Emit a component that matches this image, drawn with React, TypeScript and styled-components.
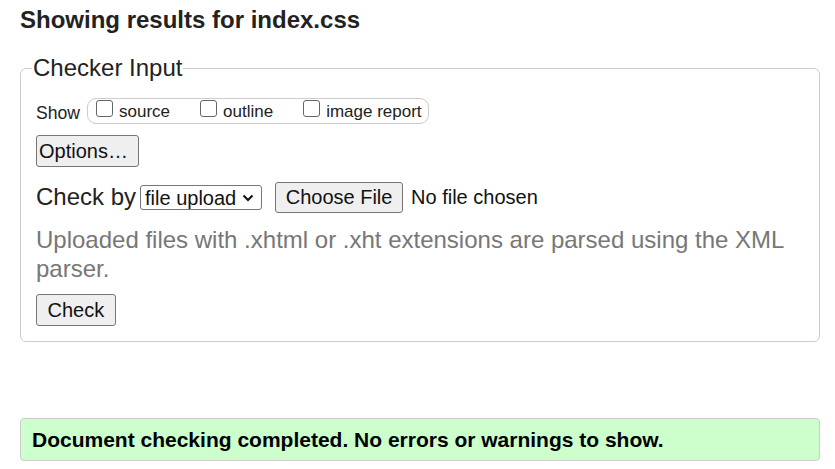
import React from "react";
import styled, { createGlobalStyle } from "styled-components";

const Global = createGlobalStyle`
  html, body { margin: 0; padding: 0; background: #fff; }
  body {
    font-family: "Liberation Sans", Arial, sans-serif;
    color: #222;
  }
`;

const Page = styled.main`
  padding: 0 15px 0 20px;
  width: 835px;
  box-sizing: border-box;
`;

const Title = styled.h2`
  margin: 6px 0 0;
  font-size: 24px;
  line-height: 28px;
  font-weight: bold;
  color: #222;
`;

const Box = styled.fieldset`
  margin: 20px 0 0;
  padding: 0 15px 15px;
  border: 1px solid #ccc;
  border-radius: 6px;
  display: flex;
  flex-direction: column;
  align-items: flex-start;
`;

const Legend = styled.legend`
  font-size: 24px;
  line-height: 28px;
  padding: 0 1px;
  margin-left: -4px;
  color: #222;
`;

const ShowRow = styled.div`
  display: flex;
  align-items: flex-start;
  margin-top: 16px;
  font-size: 17px;
  line-height: 20px;
`;

const ShowLabel = styled.span`
  font-size: 17.6px;
  margin-top: 5px;
  margin-right: 7px;
`;

const Pill = styled.div`
  display: flex;
  align-items: flex-start;
  height: 26px;
  box-sizing: border-box;
  border: 1px solid #ccc;
  border-radius: 9px;
  padding: 0 6px 0 8px;
  gap: 30px;
`;

const Option = styled.label`
  display: flex;
  align-items: flex-start;
  gap: 6px;
`;

const Box17 = styled.input`
  appearance: none;
  margin: 1px 0 0;
  width: 17px;
  height: 17px;
  box-sizing: border-box;
  border: 1px solid #666;
  border-radius: 3px;
  background: #fff;
`;

const OptText = styled.span`
  margin-top: 3px;
`;

const Btn = styled.button<{ $pad: string; $top: number }>`
  margin-top: ${(p) => p.$top}px;
  font-family: "Liberation Sans", Arial, sans-serif;
  font-size: 20px;
  line-height: 22px;
  height: 32px;
  padding: ${(p) => p.$pad};
  background: #efefef;
  color: #111;
  border: 1px solid #767676;
  border-radius: 3px;
`;

const CheckByRow = styled.div`
  display: flex;
  align-items: flex-start;
  margin-top: 15px;
`;

const CheckByLabel = styled.span`
  font-size: 24px;
  line-height: 26px;
  margin-top: 2px;
  margin-right: 4px;
`;

const SelectWrap = styled.div`
  position: relative;
  margin-top: 3px;
  margin-right: 13px;
`;

const Select = styled.select`
  appearance: none;
  width: 122px;
  height: 25px;
  box-sizing: border-box;
  font-family: "Liberation Sans", Arial, sans-serif;
  font-size: 20px;
  line-height: 22px;
  padding: 0 20px 0 4px;
  border: 1px solid #767676;
  border-radius: 3px;
  background: #fff;
  color: #111;
`;

const Chevron = styled.svg`
  position: absolute;
  right: 8px;
  top: 9px;
  pointer-events: none;
`;

const FileInput = styled.input`
  font-family: "Liberation Sans", Arial, sans-serif;
  font-size: 20px;
  color: #111;
  height: 31px;
  &::file-selector-button {
    font-family: "Liberation Sans", Arial, sans-serif;
    font-size: 20px;
    height: 31px;
    width: 128px;
    padding: 0;
    margin-right: 8px;
    background: #efefef;
    color: #111;
    border: 1px solid #767676;
    border-radius: 3px;
  }
`;

const Hint = styled.p`
  margin: 12px 0 0;
  font-size: 24px;
  line-height: 29px;
  color: #777;
`;

const Success = styled.div`
  margin-top: 76px;
  background: #ccffcc;
  border: 1px solid #ccc;
  border-radius: 4px;
  padding: 0 11px;
  font-size: 21px;
  line-height: 41px;
  font-weight: bold;
  color: #000;
`;

export default function App() {
  return (
    <Page>
      <Global />
      <Title>Showing results for index.css</Title>
      <Box>
        <Legend>Checker Input</Legend>
        <ShowRow>
          <ShowLabel>Show</ShowLabel>
          <Pill>
            <Option>
              <Box17 type="checkbox" />
              <OptText>source</OptText>
            </Option>
            <Option>
              <Box17 type="checkbox" />
              <OptText>outline</OptText>
            </Option>
            <Option>
              <Box17 type="checkbox" />
              <OptText>image report</OptText>
            </Option>
          </Pill>
        </ShowRow>
        <Btn type="button" $pad="0 10px 0 2px" $top={11}>
          Options…
        </Btn>
        <CheckByRow>
          <CheckByLabel>Check by</CheckByLabel>
          <SelectWrap>
            <Select defaultValue="upload">
              <option value="upload">file upload</option>
            </Select>
            <Chevron width="12" height="8" viewBox="0 0 12 8">
              <path d="M1.5 1.5 L6 6 L10.5 1.5" fill="none" stroke="#111" strokeWidth="2" />
            </Chevron>
          </SelectWrap>
          <FileInput type="file" />
        </CheckByRow>
        <Hint>
          Uploaded files with .xhtml or .xht extensions are parsed using the XML parser.
        </Hint>
        <Btn type="submit" $pad="0 10.5px" $top={11}>
          Check
        </Btn>
      </Box>
      <Success>Document checking completed. No errors or warnings to show.</Success>
    </Page>
  );
}
